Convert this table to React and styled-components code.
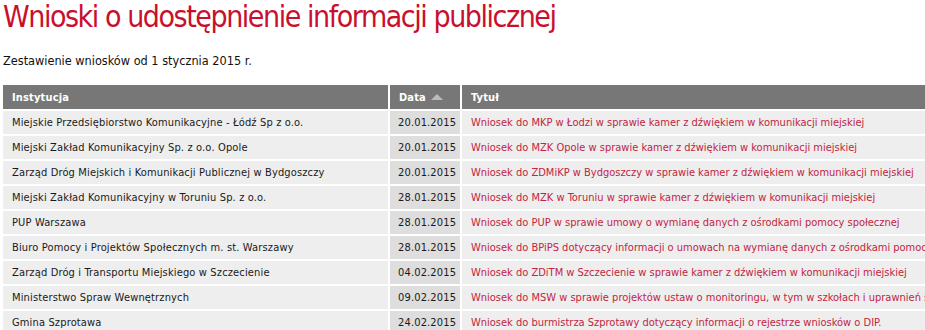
import React from "react";
import styled, { createGlobalStyle } from "styled-components";

const GlobalStyle = createGlobalStyle`
  html, body {
    margin: 0;
    padding: 0;
    background: #fff;
    overflow: hidden;
  }
  body {
    font-family: "DejaVu Sans Condensed", "DejaVu Sans", sans-serif;
    color: #222;
  }
`;

const Page = styled.div`
  padding: 0 0 0 3px;
  width: 1100px;
`;

const Title = styled.h1`
  margin: 0;
  padding-top: 1px;
  font-family: "Liberation Sans Narrow", "DejaVu Sans Condensed", sans-serif;
  font-weight: 400;
  font-size: 30px;
  letter-spacing: -1.45px;
  line-height: 32px;
  color: #c8102e;
`;

const Lead = styled.p`
  margin: 20px 0 16px;
  font-size: 12.6px;
  line-height: 16px;
  color: #111;
`;

const Table = styled.table`
  border-collapse: collapse;
  table-layout: fixed;
  font-size: 11px;
  letter-spacing: 0.15px;
  width: 1000px;
`;

const Col = styled.col`
  width: ${(p) => p.$w || "auto"};
`;

const Head = styled.th`
  background: #777;
  color: #fff;
  text-align: left;
  font-weight: 700;
  height: 24px;
  padding: 0 8px 0 9px;
  border: 2px solid #fff;
  border-top: 0;
  white-space: nowrap;
  &:first-child {
    border-left: 0;
  }
`;

const Arrow = styled.span`
  display: inline-block;
  margin-left: 5px;
  width: 0;
  height: 0;
  border-left: 6px solid transparent;
  border-right: 6px solid transparent;
  border-bottom: 6px solid #bbb;
  vertical-align: 1px;
`;

const Cell = styled.td`
  background: ${(p) => (p.$sorted ? "#dedede" : "#eeeeee")};
  height: 23px;
  padding: 0 8px 0 ${(p) => (p.$sorted ? "8px" : "9px")};
  border: 2px solid #fff;
  white-space: nowrap;
  overflow: hidden;
  color: #1a1a1a;
  &:first-child {
    border-left: 0;
  }
`;

const TitleLink = styled.a`
  color: #c3243f;
  letter-spacing: 0;
  text-decoration: none;
`;

const rows = [
  ["Miejskie Przedsiębiorstwo Komunikacyjne - Łódź Sp z o.o.", "20.01.2015", "Wniosek do MKP w Łodzi w sprawie kamer z dźwiękiem w komunikacji miejskiej"],
  ["Miejski Zakład Komunikacyjny Sp. z o.o. Opole", "20.01.2015", "Wniosek do MZK Opole w sprawie kamer z dźwiękiem w komunikacji miejskiej"],
  ["Zarząd Dróg Miejskich i Komunikacji Publicznej w Bydgoszczy", "20.01.2015", "Wniosek do ZDMiKP w Bydgoszczy w sprawie kamer z dźwiękiem w komunikacji miejskiej"],
  ["Miejski Zakład Komunikacyjny w Toruniu Sp. z o.o.", "28.01.2015", "Wniosek do MZK w Toruniu w sprawie kamer z dźwiękiem w komunikacji miejskiej"],
  ["PUP Warszawa", "28.01.2015", "Wniosek do PUP w sprawie umowy o wymianę danych z ośrodkami pomocy społecznej"],
  ["Biuro Pomocy i Projektów Społecznych m. st. Warszawy", "28.01.2015", "Wniosek do BPiPS dotyczący informacji o umowach na wymianę danych z ośrodkami pomocy społecznej"],
  ["Zarząd Dróg i Transportu Miejskiego w Szczecienie", "04.02.2015", "Wniosek do ZDiTM w Szczecienie w sprawie kamer z dźwiękiem w komunikacji miejskiej"],
  ["Ministerstwo Spraw Wewnętrznych", "09.02.2015", "Wniosek do MSW w sprawie projektów ustaw o monitoringu, w tym w szkołach i uprawnień służb"],
  ["Gmina Szprotawa", "24.02.2015", "Wniosek do burmistrza Szprotawy dotyczący informacji o rejestrze wniosków o DIP."],
];

export default function App() {
  return (
    <Page>
      <GlobalStyle />
      <Title>Wnioski o udostępnienie informacji publicznej</Title>
      <Lead>Zestawienie wniosków od 1 stycznia 2015 r.</Lead>
      <Table>
        <colgroup>
          <Col $w="386px" />
          <Col $w="72px" />
          <Col />
        </colgroup>
        <thead>
          <tr>
            <Head>Instytucja</Head>
            <Head>
              Data
              <Arrow />
            </Head>
            <Head>Tytuł</Head>
          </tr>
        </thead>
        <tbody>
          {rows.map(([inst, date, title]) => (
            <tr key={title}>
              <Cell>{inst}</Cell>
              <Cell $sorted>{date}</Cell>
              <Cell>
                <TitleLink href="#">{title}</TitleLink>
              </Cell>
            </tr>
          ))}
        </tbody>
      </Table>
    </Page>
  );
}
